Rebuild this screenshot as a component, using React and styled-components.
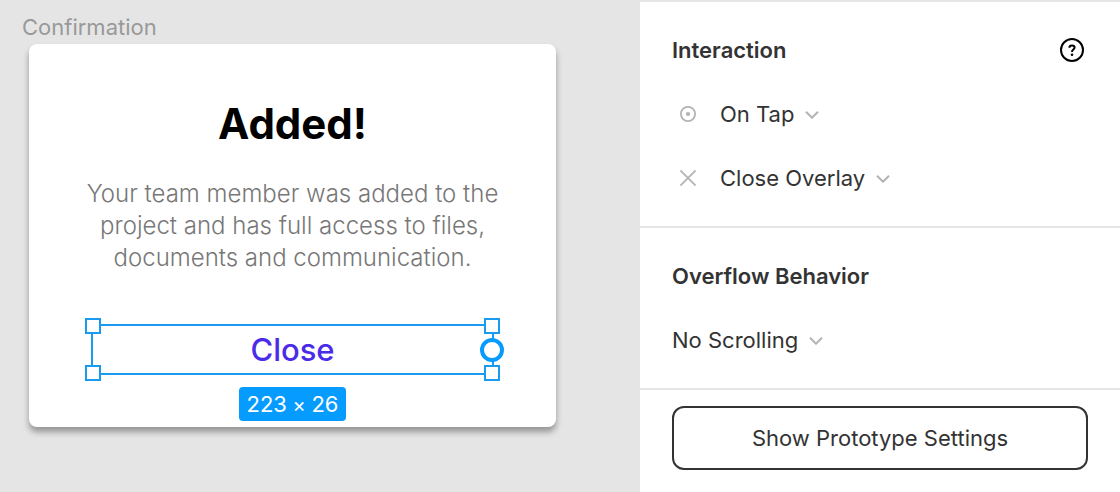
import React from "react";
import styled, { createGlobalStyle } from "styled-components";

const GlobalStyle = createGlobalStyle`
  *, *::before, *::after { box-sizing: border-box; }
  body {
    margin: 0;
    background: #e5e5e5;
    color: #333333;
    font-family: Inter, "Liberation Sans", sans-serif;
    font-size: 22px;
    line-height: 32px;
  }
  button, select { font: inherit; color: inherit; }
`;

const Page = styled.div`
  display: flex;
  min-height: 100vh;
`;

const Canvas = styled.main`
  flex: 1;
  min-width: 0;
  padding: 11px 84px 48px 22px;
`;

const FrameLabel = styled.div`
  margin-bottom: 1px;
  color: #999999;
`;

const Card = styled.section`
  margin-left: 7px;
  padding: 56px 48px 6px;
  border-radius: 8px;
  background: #ffffff;
  box-shadow: 0 5px 6px rgba(0, 0, 0, 0.35);
  text-align: center;
`;

const Title = styled.h1`
  margin: 0;
  color: #000000;
  font-size: 42px;
  font-weight: 700;
  line-height: 48px;
`;

const Message = styled.p`
  margin: 30px 0 50px;
  color: #777777;
  font-size: 24px;
  font-weight: 350;
  line-height: 32px;
`;

const Selection = styled.div`
  position: relative;
  margin: 0 14px;
  border: 2px solid #1b9bf0;
`;

const CloseButton = styled.button`
  display: block;
  width: 100%;
  height: 47px;
  padding: 0;
  border: 0;
  background: transparent;
  color: #4a2be8;
  font-size: 31px;
  font-weight: 500;
`;

const Handle = styled.span`
  position: absolute;
  ${(p) => p.$y}: -8px;
  ${(p) => p.$x}: -8px;
  width: 16px;
  height: 16px;
  border: 2px solid #1b9bf0;
  background: #ffffff;
`;

const Connector = styled.span`
  position: absolute;
  top: 50%;
  right: -12px;
  width: 24px;
  height: 24px;
  margin-top: -12px;
  border: 4px solid #069cff;
  border-radius: 50%;
  background: #ffffff;
`;

const SizeBadge = styled.div`
  width: fit-content;
  margin: 12px auto 0;
  padding: 1px 8px;
  border-radius: 4px;
  background: #069cff;
  color: #ffffff;
`;

const Times = styled.span`
  font-size: 20px;
  line-height: 1;
`;

const Panel = styled.aside`
  flex: 0 0 480px;
  border-top: 2px solid #e5e5e5;
  background: #ffffff;
`;

const Section = styled.section`
  padding: 16px 32px;
  border-bottom: 2px solid #e5e5e5;
`;

const Row = styled.div`
  display: flex;
  align-items: center;
  height: 64px;
`;

const Heading = styled.h2`
  flex: 1;
  margin: 0;
  font-size: 22px;
  font-weight: 600;
`;

const HelpButton = styled.button`
  display: grid;
  place-items: center;
  width: 32px;
  height: 32px;
  padding: 0;
  border: 0;
  background: transparent;
`;

const IconSlot = styled.span`
  display: grid;
  place-items: center;
  width: 32px;
  margin-right: 16px;
`;

const Picker = styled.label`
  display: flex;
  align-items: center;
  gap: 10px;
`;

const Select = styled.select`
  appearance: none;
  height: 32px;
  padding: 0;
  border: 0;
  background: transparent;
`;

const Footer = styled.footer`
  padding: 16px 32px 22px;
`;

const SettingsButton = styled.button`
  width: 100%;
  height: 64px;
  border: 2px solid #333333;
  border-radius: 12px;
  background: #ffffff;
`;

const TapIcon = () => (
  <svg width="16" height="16" viewBox="0 0 16 16" fill="none" aria-hidden="true">
    <circle cx="8" cy="8" r="7.1" stroke="#b3b3b3" strokeWidth="1.8" />
    <circle cx="8" cy="8" r="2.1" fill="#b3b3b3" />
  </svg>
);

const CrossIcon = () => (
  <svg width="16" height="16" viewBox="0 0 16 16" fill="none" aria-hidden="true">
    <path d="M.4.4l15.2 15.2M15.6.4L.4 15.6" stroke="#b3b3b3" strokeWidth="1.8" />
  </svg>
);

const Chevron = () => (
  <svg width="14" height="10" viewBox="0 0 14 10" fill="none" aria-hidden="true">
    <path d="M1 2.7l6 6 6-6" stroke="#b3b3b3" strokeWidth="2" />
  </svg>
);

const HelpIcon = () => (
  <svg width="24" height="24" viewBox="0 0 24 24" fill="none" aria-hidden="true">
    <circle cx="12" cy="12" r="11" stroke="#000" strokeWidth="2" />
    <path
      d="M9.4 9.7C9.4 8.2 10.5 7.4 12 7.4s2.6.9 2.6 2.2c0 1.9-2.6 2-2.6 4.3"
      stroke="#000"
      strokeWidth="2"
    />
    <circle cx="12" cy="16.7" r="1.3" fill="#000" />
  </svg>
);

function Dropdown({ label, value }) {
  return (
    <Picker>
      <Select aria-label={label} defaultValue={value}>
        <option>{value}</option>
      </Select>
      <Chevron />
    </Picker>
  );
}

export default function App() {
  return (
    <Page>
      <GlobalStyle />
      <Canvas>
        <FrameLabel>Confirmation</FrameLabel>
        <Card>
          <Title>Added!</Title>
          <Message>
            Your team member was added to the project and has full access to
            files, documents and communication.
          </Message>
          <Selection>
            <CloseButton type="button">Close</CloseButton>
            <Handle $x="left" $y="top" />
            <Handle $x="right" $y="top" />
            <Handle $x="left" $y="bottom" />
            <Handle $x="right" $y="bottom" />
            <Connector />
          </Selection>
          <SizeBadge>
            223<Times> × </Times>26
          </SizeBadge>
        </Card>
      </Canvas>
      <Panel>
        <Section>
          <Row>
            <Heading>Interaction</Heading>
            <HelpButton type="button" aria-label="Help">
              <HelpIcon />
            </HelpButton>
          </Row>
          <Row>
            <IconSlot>
              <TapIcon />
            </IconSlot>
            <Dropdown label="Trigger" value="On Tap" />
          </Row>
          <Row>
            <IconSlot>
              <CrossIcon />
            </IconSlot>
            <Dropdown label="Action" value="Close Overlay" />
          </Row>
        </Section>
        <Section>
          <Row>
            <Heading>Overflow Behavior</Heading>
          </Row>
          <Row>
            <Dropdown label="Overflow behavior" value="No Scrolling" />
          </Row>
        </Section>
        <Footer>
          <SettingsButton type="button">Show Prototype Settings</SettingsButton>
        </Footer>
      </Panel>
    </Page>
  );
}
